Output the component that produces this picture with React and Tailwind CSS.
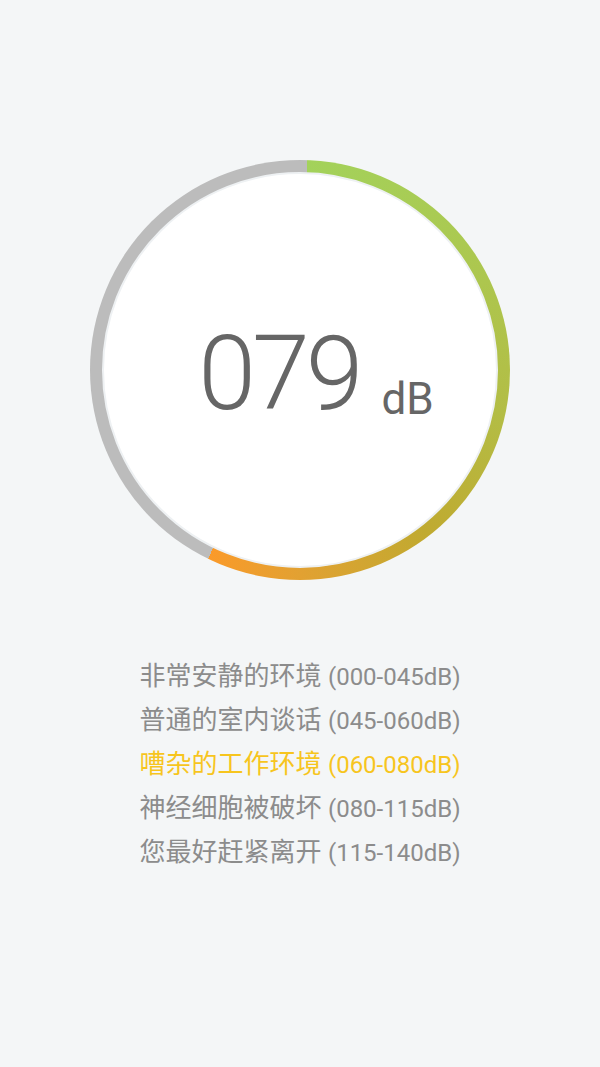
import React from 'react';

const levels = [
  { label: '非常安静的环境', range: '(000-045dB)' },
  { label: '普通的室内谈话', range: '(045-060dB)' },
  { label: '嘈杂的工作环境', range: '(060-080dB)', active: true },
  { label: '神经细胞被破坏', range: '(080-115dB)' },
  { label: '您最好赶紧离开', range: '(115-140dB)' },
];

const Gauge = () => (
  <div className="w-[420px] h-[420px] rounded-full flex items-center justify-center bg-[conic-gradient(from_2deg,#a3d25b_0deg,#abc951_50deg,#b3bd45_100deg,#c0aa30_140deg,#e2a132_178deg,#fa9a2a_204deg,#bcbcbc_204deg,#bcbcbc_358deg)]">
    <div className="w-[396px] h-[396px] rounded-full bg-white border-2 border-[#eef1f3] flex items-center justify-center">
      <div className="flex items-baseline pl-[32px] pt-[8px] text-[#666666] font-['Roboto',sans-serif] font-light">
        <span className="text-[104px] leading-none tracking-[-4px]">079</span>
        <span className="text-[44px] leading-none ml-[22px] relative top-[5px] font-normal">dB</span>
      </div>
    </div>
  </div>
);

export default function App() {
  return (
    <div className="min-h-screen bg-[#f4f6f7] flex flex-col items-center pt-[160px]">
      <Gauge />
      <ul className="mt-[74px] flex flex-col font-['Roboto','Noto_Sans_CJK_SC',sans-serif] text-[26px]">
        {levels.map((l) => (
          <li
            key={l.range}
            className={`h-[44px] leading-[44px] whitespace-nowrap ${l.active ? 'text-[#f7c51e]' : 'text-[#8c8c8c]'}`}
          >
            {l.label} <span className="text-[24px]">{l.range}</span>
          </li>
        ))}
      </ul>
    </div>
  );
}
